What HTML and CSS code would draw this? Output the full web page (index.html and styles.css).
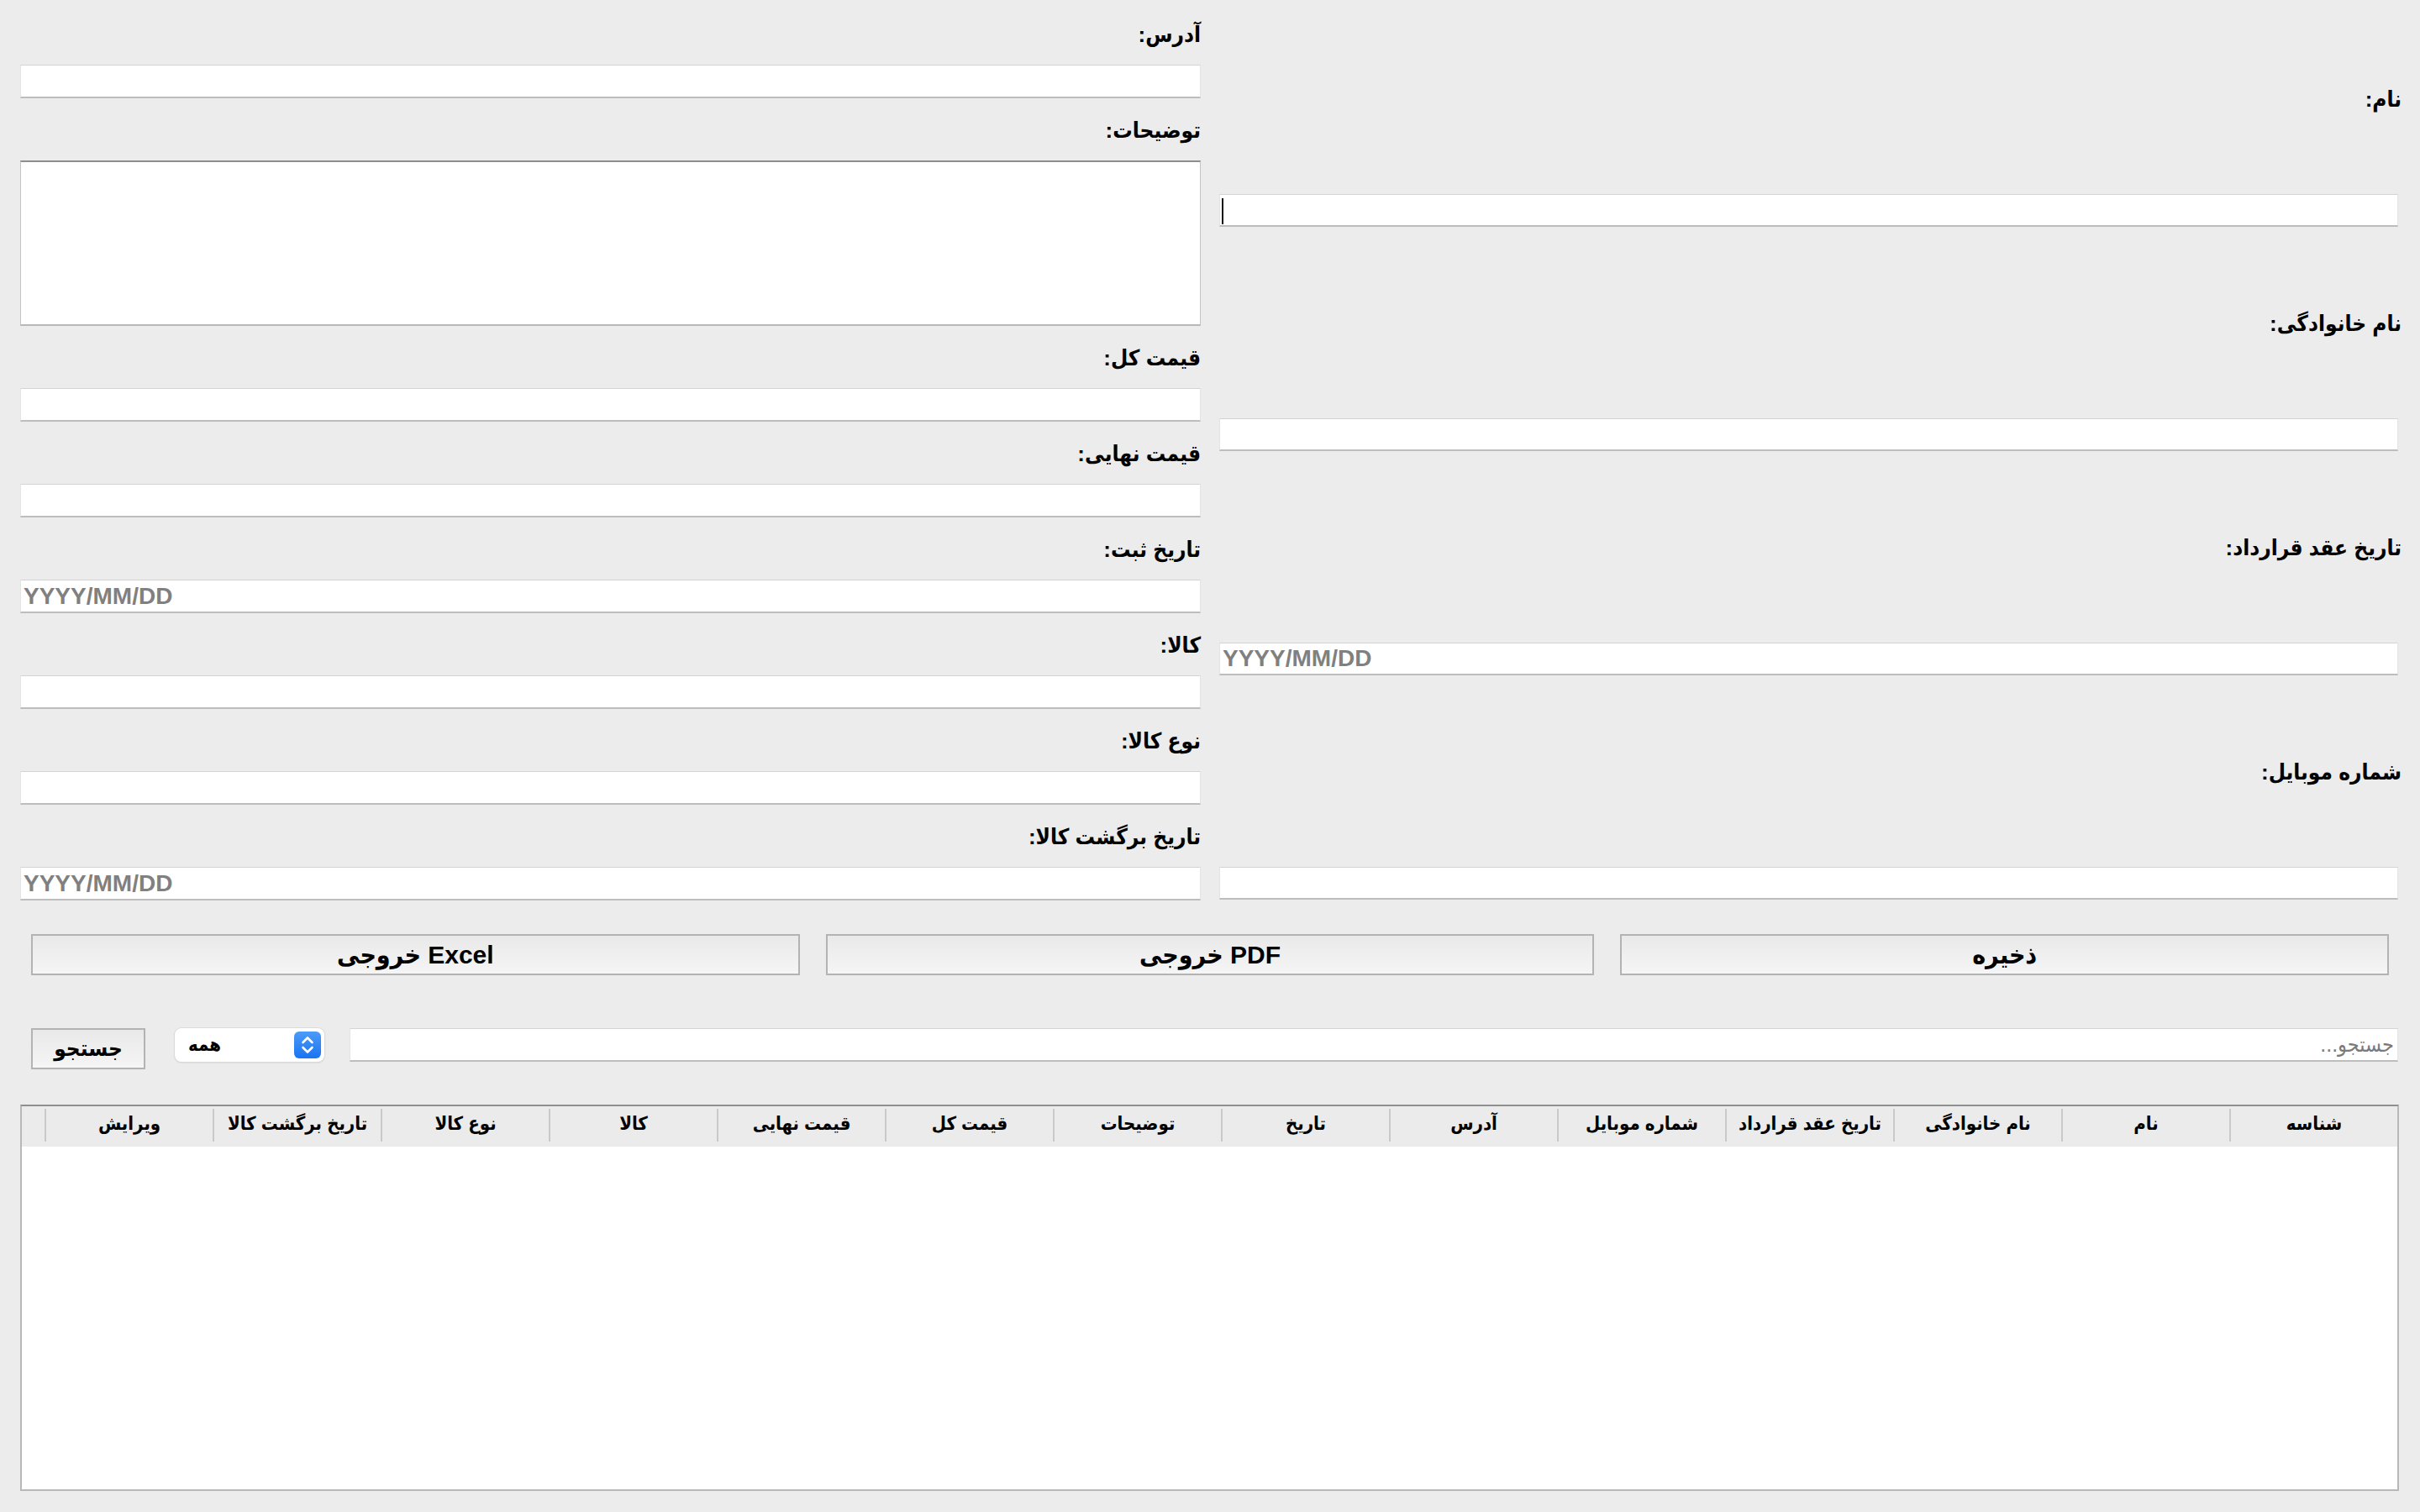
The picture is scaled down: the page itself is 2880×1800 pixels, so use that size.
FILE: index.html
```html
<!DOCTYPE html>
<html lang="fa" dir="rtl">
<head>
<meta charset="utf-8">
<title>فرم</title>
<link rel="stylesheet" href="styles.css">
</head>
<body>
<div class="app">
  <div class="form">
    <div class="col col-right">
      <div class="field">
        <div class="label tall">نام:</div>
        <div class="input-wrap">
          <div class="input ltr"></div>
          <span class="caret"></span>
        </div>
      </div>
      <div class="field">
        <div class="label tall">نام خانوادگی:</div>
        <div class="input"></div>
      </div>
      <div class="field">
        <div class="label tall">تاریخ عقد قرارداد:</div>
        <div class="input ltr"><span class="ph">YYYY/MM/DD</span></div>
      </div>
      <div class="field">
        <div class="label tall">شماره موبایل:</div>
        <div class="input"></div>
      </div>
    </div>
    <div class="col col-left">
      <div class="field">
        <div class="label">آدرس:</div>
        <div class="input"></div>
      </div>
      <div class="field">
        <div class="label">توضیحات:</div>
        <div class="textarea"></div>
      </div>
      <div class="field">
        <div class="label">قیمت کل:</div>
        <div class="input"></div>
      </div>
      <div class="field">
        <div class="label">قیمت نهایی:</div>
        <div class="input"></div>
      </div>
      <div class="field">
        <div class="label">تاریخ ثبت:</div>
        <div class="input ltr"><span class="ph">YYYY/MM/DD</span></div>
      </div>
      <div class="field">
        <div class="label">کالا:</div>
        <div class="input"></div>
      </div>
      <div class="field">
        <div class="label">نوع کالا:</div>
        <div class="input"></div>
      </div>
      <div class="field">
        <div class="label">تاریخ برگشت کالا:</div>
        <div class="input ltr"><span class="ph">YYYY/MM/DD</span></div>
      </div>
    </div>
  </div>

  <div class="actions">
    <div class="btn big">ذخیره</div>
    <div class="btn big">PDF خروجی</div>
    <div class="btn big">Excel خروجی</div>
  </div>

  <div class="search-row">
    <div class="search-field"><span class="ph-fa">جستجو...</span></div>
    <div class="combo">
      <span class="combo-text">همه</span>
      <span class="combo-arrows">
        <svg width="32" height="32" viewBox="0 0 32 32">
          <path d="M10.5 13 L16 7.5 L21.5 13" fill="none" stroke="#fff" stroke-width="2.6" stroke-linecap="round" stroke-linejoin="round"/>
          <path d="M10.5 19 L16 24.5 L21.5 19" fill="none" stroke="#fff" stroke-width="2.6" stroke-linecap="round" stroke-linejoin="round"/>
        </svg>
      </span>
    </div>
    <div class="btn small">جستجو</div>
  </div>

  <div class="table">
    <div class="thead">
      <div class="th">شناسه</div>
      <div class="th">نام</div>
      <div class="th">نام خانوادگی</div>
      <div class="th">تاریخ عقد قرارداد</div>
      <div class="th">شماره موبایل</div>
      <div class="th">آدرس</div>
      <div class="th">تاریخ</div>
      <div class="th">توضیحات</div>
      <div class="th">قیمت کل</div>
      <div class="th">قیمت نهایی</div>
      <div class="th">کالا</div>
      <div class="th">نوع کالا</div>
      <div class="th">تاریخ برگشت کالا</div>
      <div class="th">ویرایش</div>
      <div class="th filler"></div>
    </div>
    <div class="tbody"></div>
  </div>
</div>
</body>
</html>
```

FILE: styles.css
```css
html, body {
  margin: 0;
  padding: 0;
}
body {
  background: #ececec;
  font-family: "Liberation Sans", "DejaVu Sans Condensed", "DejaVu Sans", sans-serif;
  color: #000;
  width: 2880px;
  height: 1800px;
  overflow: hidden;
}
.app {
  display: flex;
  flex-direction: column;
}
.form {
  display: grid;
  grid-template-columns: 1403px 1405px;
  column-gap: 22px;
  padding: 3px 26px 0 24px;
}
.col {
  display: flex;
  flex-direction: column;
}
.field {
  display: flex;
  flex-direction: column;
}
.label {
  height: 74px;
  display: flex;
  align-items: center;
  font-weight: bold;
  font-size: 26px;
  padding-top: 3px;
  box-sizing: border-box;
}
.label.tall {
  height: 228px;
  margin-right: -4px;
}
.input-wrap {
  position: relative;
}
.input {
  height: 40px;
  box-sizing: border-box;
  background: #fff;
  border-top: 1px solid #d4d4d4;
  border-left: 1px solid #e4e4e4;
  border-right: 1px solid #e4e4e4;
  border-bottom: 2px solid #bdbdbd;
  display: flex;
  align-items: center;
}
.col-right .input {
  height: 39px;
}
.input.ltr {
  direction: ltr;
}
.caret {
  position: absolute;
  left: 3px;
  top: 5px;
  width: 2px;
  height: 31px;
  background: #111;
}
.ph {
  color: #808080;
  font-weight: bold;
  font-size: 28px;
  padding-left: 3px;
}
.textarea {
  height: 197px;
  box-sizing: border-box;
  background: #fff;
  border-top: 2px solid #8e8e8e;
  border-left: 1px solid #c4c4c4;
  border-right: 1px solid #c4c4c4;
  border-bottom: 2px solid #b8b8b8;
}
.actions {
  display: grid;
  grid-template-columns: 1fr 1fr 1fr;
  column-gap: 31px;
  padding: 0 37px;
  margin-top: 40px;
}
.btn {
  box-sizing: border-box;
  border: 2px solid #b3b3b3;
  background: linear-gradient(#e9e9e9, #f5f5f5);
  display: flex;
  align-items: center;
  justify-content: center;
  font-weight: bold;
  font-size: 30px;
}
.btn.big {
  height: 49px;
}
.btn.small {
  height: 49px;
  width: 136px;
  font-size: 26px;
}
.search-row {
  display: flex;
  align-items: flex-start;
  margin-top: 63px;
  padding: 0 26px 0 37px;
}
.search-field {
  flex: 1;
  height: 40px;
  box-sizing: border-box;
  background: #fff;
  border-top: 1px solid #d4d4d4;
  border-left: 1px solid #e4e4e4;
  border-right: 1px solid #e4e4e4;
  border-bottom: 2px solid #bdbdbd;
  display: flex;
  align-items: center;
  padding-right: 4px;
}
.ph-fa {
  color: #7a7a7a;
  font-size: 25px;
}
.combo {
  width: 178px;
  height: 40px;
  box-sizing: border-box;
  margin: 0 30px 0 35px;
  background: #fff;
  border-radius: 8px;
  box-shadow: 0 0 0 1px #dadada, 0 1px 2px rgba(0,0,0,0.18);
  display: flex;
  align-items: center;
  justify-content: space-between;
  direction: ltr;
  padding: 0 4px 0 16px;
}
.combo-text {
  font-weight: bold;
  font-size: 22px;
  direction: rtl;
}
.combo-arrows {
  width: 32px;
  height: 32px;
  border-radius: 6px;
  background: linear-gradient(#4b9bf8, #1a74f2);
  display: flex;
}
.table {
  margin: 42px 25px 0 24px;
  height: 460px;
  box-sizing: border-box;
  background: #fff;
  border-top: 2px solid #8f8f8f;
  border-left: 2px solid #b8b8b8;
  border-right: 2px solid #b8b8b8;
  border-bottom: 2px solid #b8b8b8;
  display: flex;
  flex-direction: column;
}
.thead {
  display: flex;
  height: 48px;
  background: #ebebeb;
  align-items: flex-start;
}
.th {
  width: 200px;
  height: 39px;
  margin-top: 3px;
  padding-bottom: 4px;
  box-sizing: border-box;
  border-left: 2px solid #c9c9c9;
  display: flex;
  align-items: center;
  justify-content: center;
  font-weight: bold;
  font-size: 22px;
}
.th.filler {
  flex: 1;
  width: auto;
  border-left: none;
}
.tbody {
  flex: 1;
  background: #fff;
}
```
